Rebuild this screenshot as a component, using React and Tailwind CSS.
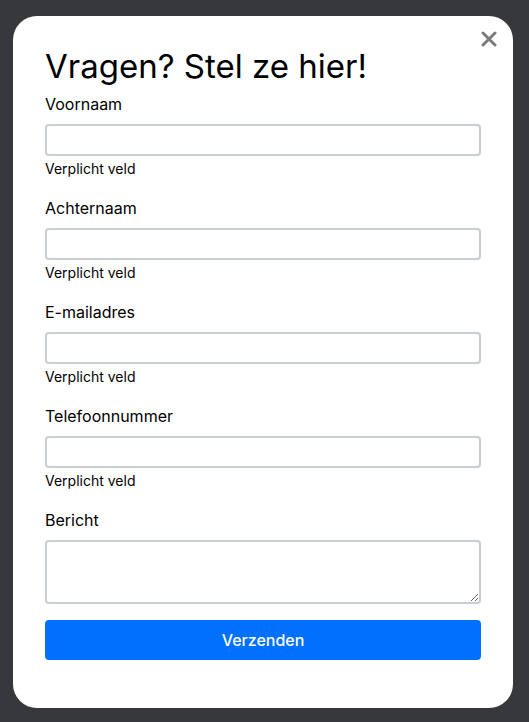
import React from 'react';

const FIELDS = ['Voornaam', 'Achternaam', 'E-mailadres', 'Telefoonnummer'];

const Field = ({ label }) => (
  <div className="flex flex-col">
    <label className="text-[16px] leading-6 text-black">{label}</label>
    <input
      type="text"
      className="mt-2 h-8 w-full rounded-[4px] border-2 border-[#c9ced4] bg-white px-2 outline-none"
    />
    <span className="mt-[3px] mb-[17px] text-[14px] leading-5 text-black">
      Verplicht veld
    </span>
  </div>
);

const App = () => {
  return (
    <div
      className="min-h-[722px] bg-[#37383c] px-[13px] pt-4 pb-[14px]"
      style={{ fontFamily: 'Inter, "Noto Sans", sans-serif' }}
    >
      <div className="relative w-[500px] rounded-[24px] bg-white px-8 pt-[30px] pb-12">
        <button className="absolute right-[12px] top-[11px] flex h-6 w-6 items-center justify-center text-[#7b7b7b]">
          <svg width="16" height="16" viewBox="0 0 16 16" fill="none">
            <path d="M2 2L14 14M14 2L2 14" stroke="currentColor" strokeWidth="3" strokeLinecap="round" />
          </svg>
        </button>

        <h1 className="mb-[6px] text-[33px] leading-10 font-normal text-black">
          Vragen? Stel ze hier!
        </h1>

        <form className="flex flex-col" onSubmit={(e) => e.preventDefault()}>
          {FIELDS.map((f) => (
            <Field key={f} label={f} />
          ))}

          <label className="text-[16px] leading-6 text-black">Bericht</label>
          <textarea className="mt-2 h-16 w-full rounded-[4px] border-2 border-[#c9ced4] bg-white px-2 outline-none" />

          <button
            type="submit"
            className="mt-4 h-10 w-full rounded-[4px] bg-[#0070ff] text-[16px] font-medium text-white"
          >
            Verzenden
          </button>
        </form>
      </div>
    </div>
  );
};

export default App;
